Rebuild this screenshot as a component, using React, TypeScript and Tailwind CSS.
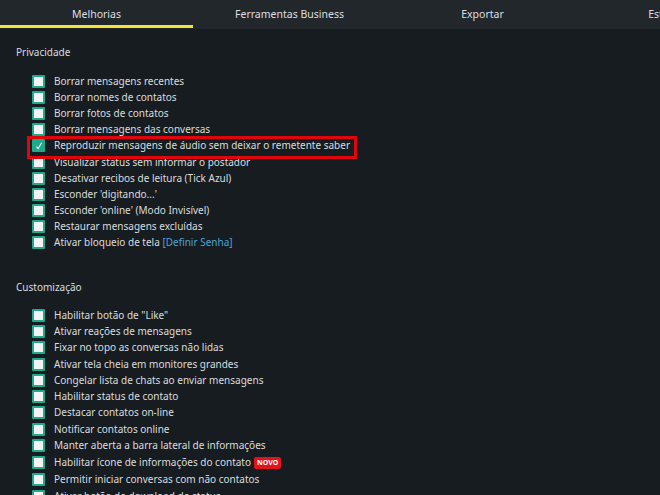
import React from "react";

const tabs = ["Melhorias", "Ferramentas Business", "Exportar", "Estatísticas"];

const privacidade: { label: React.ReactNode; checked?: boolean; highlight?: boolean }[] = [
  { label: "Borrar mensagens recentes" },
  { label: "Borrar nomes de contatos" },
  { label: "Borrar fotos de contatos" },
  { label: "Borrar mensagens das conversas" },
  { label: "Reproduzir mensagens de áudio sem deixar o remetente saber", checked: true, highlight: true },
  { label: "Visualizar status sem informar o postador" },
  { label: "Desativar recibos de leitura (Tick Azul)" },
  { label: "Esconder 'digitando...'" },
  { label: "Esconder 'online' (Modo Invisível)" },
  { label: "Restaurar mensagens excluídas" },
  {
    label: (
      <>
        Ativar bloqueio de tela <span className="text-[#4da3d9]">[Definir Senha]</span>
      </>
    ),
  },
];

const customizacao: { label: string; novo?: boolean }[] = [
  { label: 'Habilitar botão de "Like"' },
  { label: "Ativar reações de mensagens" },
  { label: "Fixar no topo as conversas não lidas" },
  { label: "Ativar tela cheia em monitores grandes" },
  { label: "Congelar lista de chats ao enviar mensagens" },
  { label: "Habilitar status de contato" },
  { label: "Destacar contatos on-line" },
  { label: "Notificar contatos online" },
  { label: "Manter aberta a barra lateral de informações" },
  { label: "Habilitar ícone de informações do contato", novo: true },
  { label: "Permitir iniciar conversas com não contatos" },
  { label: "Ativar botão de download de status" },
];

function Box({ checked }: { checked?: boolean }) {
  if (checked) {
    return (
      <span className="flex h-[13px] w-[13px] flex-none items-center justify-center rounded-[1px] bg-[#1fa98b]">
        <svg viewBox="0 0 12 12" className="h-[10px] w-[10px]" fill="none" stroke="#ffffff" strokeWidth="1.3">
          <path d="M3 6.8 L4.9 9.2 L9.2 2.2" />
        </svg>
      </span>
    );
  }
  return <span className="h-[13px] w-[13px] flex-none rounded-[1px] border-2 border-[#22a88b] bg-[#f2f4f3]" />;
}

export default function App() {
  return (
    <div
      className="h-[495px] w-[660px] overflow-hidden bg-[#171c21] text-[10px] text-[#d9dcde]"
      style={{ fontFamily: '"Noto Sans", "Open Sans", sans-serif' }}
    >
      {/* Tabs */}
      <div className="flex h-[29px] w-[772px] bg-[#22272c]">
        {tabs.map((t, i) => (
          <div key={t} className="relative flex w-[193px] flex-none items-center justify-center text-[10.5px] text-[#dcdfe2]">
            {t}
            {i === 0 && <div className="absolute bottom-[1px] left-0 right-0 h-[3px] bg-[#f4e23c]" />}
          </div>
        ))}
      </div>

      <div className="pl-4 pt-[15px]">
        <div className="leading-4">Privacidade</div>
        <div className="mt-[13px] pl-4">
          {privacidade.map((r, i) => (
            <div key={i} className={`relative flex h-[16.2px] items-center ${r.highlight ? "z-10" : ""}`}>
              {r.highlight && (
                <div className="absolute -top-[2px] -bottom-[5px] -left-[5px] w-[330px] border-[3px] border-[#e0050a] bg-[#171c21]" />
              )}
              <span className="relative flex items-center gap-[9px]">
                <Box checked={r.checked} />
                <span className="whitespace-nowrap">{r.label}</span>
              </span>
            </div>
          ))}
        </div>

        <div className="mt-[28px] leading-4">Customização</div>
        <div className="mt-[12px] pl-4">
          {customizacao.map((r, i) => (
            <div key={i} className={`flex items-center gap-[9px] ${r.novo ? "h-[18px]" : "h-[16.3px]"}`}>
              <Box />
              <span className="whitespace-nowrap">{r.label}</span>
              {r.novo && (
                <span className="-ml-[6px] rounded-[2px] bg-[#e4121b] px-[3px] text-[7px] font-bold leading-[12px] text-white">
                  NOVO
                </span>
              )}
            </div>
          ))}
        </div>
      </div>
    </div>
  );
}
